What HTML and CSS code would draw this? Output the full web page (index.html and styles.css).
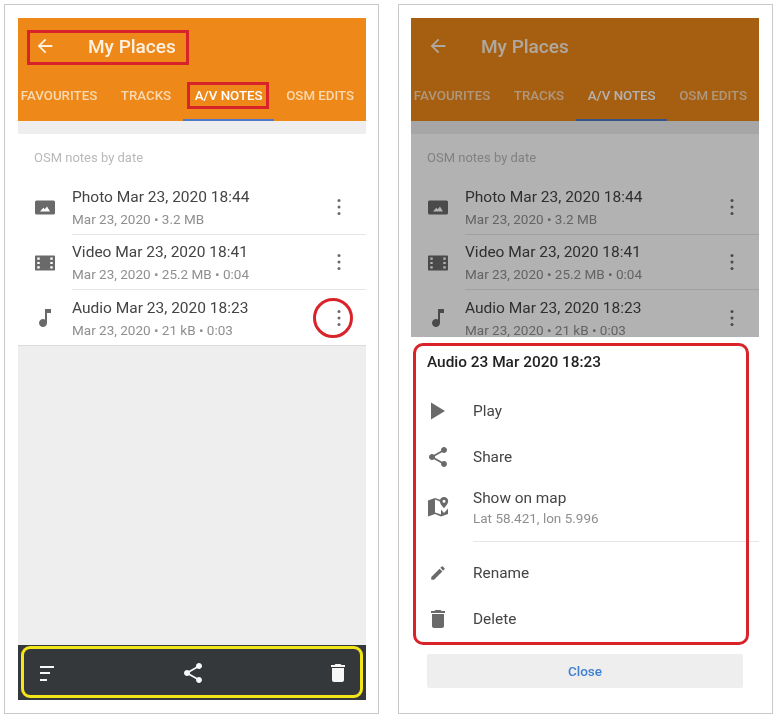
FILE: index.html
```html
<!DOCTYPE html>
<html lang="en">
<head>
<meta charset="UTF-8">
<title>My Places</title>
<link rel="stylesheet" href="styles.css">
</head>
<body>
    <svg class="icon-defs" aria-hidden="true">
        <symbol id="i-back" viewBox="0 0 24 24"><path d="M20 11H7.830l5.590-5.590L12 4l-8 8 8 8 1.410-1.410L7.830 13H20v-2z"/></symbol>
        <symbol id="i-photo" viewBox="0 0 24 24"><path fill-rule="evenodd" d="M3.500 4.500h17A1.500 1.500 0 0 1 22 6v11a1.500 1.500 0 0 1-1.500 1.500h-17A1.500 1.500 0 0 1 2 17V6a1.500 1.500 0 0 1 1.500-1.500zM7 15.500h10l-3-5-2.200 2.800-1.500-1.600z"/></symbol>
        <symbol id="i-film" viewBox="0 0 24 24"><path fill-rule="evenodd" d="M2.800 4.500h18.400a.8.8 0 0 1 .8.8v13.400a.8.8 0 0 1-.8.8H2.800a.8.8 0 0 1-.8-.8V5.300a.8.8 0 0 1 .8-.8zM4.300 6.500v2.200h2.400V6.500zm0 4.400v2.200h2.400v-2.200zm0 4.400v2.200h2.400v-2.200zM17.300 6.500v2.200h2.400V6.500zm0 4.400v2.200h2.400v-2.200zm0 4.400v2.200h2.400v-2.200z"/></symbol>
        <symbol id="i-music" viewBox="0 0 24 24"><path d="M12 3v10.550c-.59-.34-1.270-.55-2-.55-2.210 0-4 1.790-4 4s1.790 4 4 4 4-1.790 4-4V7h4V3h-6z"/></symbol>
        <symbol id="i-more" viewBox="0 0 24 24"><circle cx="12" cy="5.500" r="1.500"/><circle cx="12" cy="12" r="1.500"/><circle cx="12" cy="18.500" r="1.500"/></symbol>
        <symbol id="i-share" viewBox="0 0 24 24"><path d="M18 16.080c-.76 0-1.440.3-1.960.77L8.910 12.700c.05-.23.09-.46.09-.7s-.04-.47-.09-.7l7.050-4.110c.54.5 1.250.81 2.040.81 1.660 0 3-1.340 3-3s-1.340-3-3-3-3 1.340-3 3c0 .24.04.47.09.7L8.040 9.810C7.500 9.310 6.790 9 6 9c-1.660 0-3 1.340-3 3s1.340 3 3 3c.79 0 1.500-.31 2.040-.81l7.120 4.160c-.05.21-.08.43-.08.65 0 1.610 1.310 2.920 2.920 2.920 1.610 0 2.920-1.310 2.920-2.920s-1.310-2.920-2.920-2.920z"/></symbol>
        <symbol id="i-trash" viewBox="0 0 24 24"><path d="M6 19c0 1.100.9 2 2 2h8c1.100 0 2-.9 2-2V7H6v12zM19 4h-3.500l-1-1h-5l-1 1H5v2h14V4z"/></symbol>
        <symbol id="i-sort" viewBox="0 0 24 24"><path d="M5 5h14v2H5zM5 11h10v2H5zM5 18h7v2H5z"/></symbol>
        <symbol id="i-play" viewBox="0 0 24 24"><path d="M5 3.500v17L19 12z"/></symbol>
        <symbol id="i-edit" viewBox="0 0 24 24"><path d="M3 17.250V21h3.750L17.810 9.940l-3.750-3.750L3 17.250zM20.710 7.040c.39-.39.39-1.020 0-1.410l-2.340-2.340c-.39-.39-1.020-.39-1.410 0l-1.830 1.830 3.750 3.750 1.830-1.830z"/></symbol>
        <symbol id="i-map" viewBox="0 0 24 24"><path d="M2 5.500 9 3v16l-7 2.500zM9 3l5 1.800v1.600L9 4.600zM9 17.400l6 2.200v1.800L9 19zM15 21.400l7-2.500v-5.400l-4 4.500-3-3.500z"/><path fill-rule="evenodd" d="M18 2a4.200 4.200 0 0 1 4.200 4.200c0 2.800-4.200 7-4.200 7s-4.200-4.200-4.200-7A4.200 4.200 0 0 1 18 2zm0 2.700a1.500 1.500 0 1 0 0 3 1.500 1.500 0 0 0 0-3z"/></symbol>
    </svg>

    <section class="panel">
        <div class="app">
            <header class="appbar">
                <div class="toolbar">
                    <svg class="icon"><use href="#i-back"/></svg>
                    <span class="toolbar-title">My Places</span>
                </div>
                <nav class="tabs">
                    <span class="tab">FAVOURITES</span>
                    <span class="tab">TRACKS</span>
                    <span class="tab tab-active">A/V NOTES</span>
                    <span class="tab">OSM EDITS</span>
                </nav>
            </header>
            <div class="band"></div>
            <div class="notes">
                <div class="notes-head">OSM notes by date</div>
                <div class="note">
                    <svg class="icon note-icon"><use href="#i-photo"/></svg>
                    <div class="note-body">
                        <div class="note-text"><div class="note-title">Photo Mar 23, 2020 18:44</div><div class="note-sub">Mar 23, 2020 • 3.2 MB</div></div>
                        <svg class="icon note-more"><use href="#i-more"/></svg>
                    </div>
                </div>
                <div class="note">
                    <svg class="icon note-icon"><use href="#i-film"/></svg>
                    <div class="note-body">
                        <div class="note-text"><div class="note-title">Video Mar 23, 2020 18:41</div><div class="note-sub">Mar 23, 2020 • 25.2 MB • 0:04</div></div>
                        <svg class="icon note-more"><use href="#i-more"/></svg>
                    </div>
                </div>
                <div class="note note-last">
                    <svg class="icon note-icon"><use href="#i-music"/></svg>
                    <div class="note-body">
                        <div class="note-text"><div class="note-title">Audio Mar 23, 2020 18:23</div><div class="note-sub">Mar 23, 2020 • 21 kB • 0:03</div></div>
                        <svg class="icon note-more"><use href="#i-more"/></svg>
                    </div>
                </div>
            </div>
            <div class="spacer"></div>
            <footer class="bottombar">
                <svg class="icon"><use href="#i-sort"/></svg>
                <svg class="icon"><use href="#i-share"/></svg>
                <svg class="icon"><use href="#i-trash"/></svg>
            </footer>
            <div class="mark mark-title"></div>
            <div class="mark mark-tab"></div>
            <div class="mark mark-more"></div>
            <div class="mark mark-bar"></div>
        </div>
    </section>

    <section class="panel panel-second">
        <div class="app">
            <header class="appbar">
                <div class="toolbar">
                    <svg class="icon"><use href="#i-back"/></svg>
                    <span class="toolbar-title">My Places</span>
                </div>
                <nav class="tabs">
                    <span class="tab">FAVOURITES</span>
                    <span class="tab">TRACKS</span>
                    <span class="tab tab-active">A/V NOTES</span>
                    <span class="tab">OSM EDITS</span>
                </nav>
            </header>
            <div class="band"></div>
            <div class="notes">
                <div class="notes-head">OSM notes by date</div>
                <div class="note">
                    <svg class="icon note-icon"><use href="#i-photo"/></svg>
                    <div class="note-body">
                        <div class="note-text"><div class="note-title">Photo Mar 23, 2020 18:44</div><div class="note-sub">Mar 23, 2020 • 3.2 MB</div></div>
                        <svg class="icon note-more"><use href="#i-more"/></svg>
                    </div>
                </div>
                <div class="note">
                    <svg class="icon note-icon"><use href="#i-film"/></svg>
                    <div class="note-body">
                        <div class="note-text"><div class="note-title">Video Mar 23, 2020 18:41</div><div class="note-sub">Mar 23, 2020 • 25.2 MB • 0:04</div></div>
                        <svg class="icon note-more"><use href="#i-more"/></svg>
                    </div>
                </div>
                <div class="note note-last">
                    <svg class="icon note-icon"><use href="#i-music"/></svg>
                    <div class="note-body">
                        <div class="note-text"><div class="note-title">Audio Mar 23, 2020 18:23</div><div class="note-sub">Mar 23, 2020 • 21 kB • 0:03</div></div>
                        <svg class="icon note-more"><use href="#i-more"/></svg>
                    </div>
                </div>
            </div>
            <div class="scrim"></div>
            <div class="sheet">
                <div class="sheet-title">Audio 23 Mar 2020 18:23</div>
                <div class="action"><svg class="icon"><use href="#i-play"/></svg><span>Play</span></div>
                <div class="action"><svg class="icon"><use href="#i-share"/></svg><span>Share</span></div>
                <div class="action action-tall">
                    <svg class="icon"><use href="#i-map"/></svg>
                    <div><div>Show on map</div><div class="action-sub">Lat 58.421, lon 5.996</div></div>
                </div>
                <div class="sheet-divider"></div>
                <div class="action"><svg class="icon icon-small"><use href="#i-edit"/></svg><span>Rename</span></div>
                <div class="action"><svg class="icon"><use href="#i-trash"/></svg><span>Delete</span></div>
                <div class="close">Close</div>
                <div class="mark mark-sheet"></div>
            </div>
        </div>
    </section>
</body>
</html>
```

FILE: styles.css
```css
body {
    font-family: Roboto, "Liberation Sans", sans-serif;
    display: flex;
    gap: 19px;
    margin: 0;
    padding: 4px;
    background-color: white;
}
.icon-defs {
    display: none;
}
.panel {
    flex: none;
    width: 348px;
    height: 682px;
    padding: 13px 12px 13px 13px;
    border: 1px solid #c9c9c9;
}
.panel-second {
    padding-left: 12px;
    padding-right: 13px;
}
.app {
    position: relative;
    display: flex;
    flex-direction: column;
    height: 682px;
    overflow: hidden;
    background-color: white;
    filter: blur(0.5px);
}
.icon {
    display: block;
    flex: none;
    width: 24px;
    height: 24px;
    fill: #6a6a6a;
}
.icon-small {
    padding: 3px;
    box-sizing: border-box;
}

/* orange header */
.appbar {
    height: 103px;
    background-color: #ee8819;
}
.toolbar {
    display: flex;
    align-items: center;
    gap: 32px;
    height: 56px;
    padding-left: 16px;
}
.toolbar .icon {
    fill: #fdf1e2;
    width: 22px;
    height: 22px;
}
.toolbar-title {
    color: #fdf1e2;
    font-size: 19px;
    font-weight: 500;
}
.tabs {
    display: flex;
    height: 47px;
    margin-left: -9px;
}
.tab {
    flex: none;
    padding: 14px 11.800px 0;
    color: #fad9b2;
    font-size: 13.300px;
    font-weight: 500;
    white-space: nowrap;
}
.tab-active {
    color: white;
    border-bottom: 2px solid #4f79c6;
}
.band {
    height: 13px;
    background-color: #eeeeee;
}

/* notes list */
.notes {
    background-color: white;
}
.notes-head {
    height: 46px;
    padding: 16px 0 0 16px;
    box-sizing: border-box;
    color: #b9b9b9;
    font-size: 13px;
}
.note {
    display: flex;
    align-items: center;
    height: 55px;
    padding-left: 15px;
}
.note-icon {
    margin-right: 15px;
}
.note-body {
    display: flex;
    flex: 1;
    align-items: center;
    justify-content: space-between;
    height: 100%;
    padding-right: 15px;
    box-sizing: border-box;
    border-bottom: 1px solid #e6e6e6;
}
.note-last {
    border-bottom: 1px solid #dcdcdc;
}
.note-last .note-body {
    border-bottom: none;
}
.note-text {
    padding-top: 1px;
}
.note-title {
    color: #444;
    font-size: 15.500px;
    line-height: 20px;
}
.note-sub {
    margin-top: 3px;
    color: #8f8f8f;
    font-size: 13.500px;
    line-height: 18px;
}
.spacer {
    flex: 1;
    background-color: #eeeeee;
}
.bottombar {
    display: flex;
    align-items: center;
    justify-content: space-between;
    height: 55px;
    padding: 0 16px 0 17px;
    background-color: #35383a;
}
.bottombar .icon {
    fill: #f7f7f7;
}

/* bottom sheet */
.scrim {
    position: absolute;
    inset: 0;
    background-color: rgba(0, 0, 0, 0.3);
}
.sheet {
    position: absolute;
    left: 0;
    right: 0;
    bottom: 0;
    height: 363px;
    box-sizing: border-box;
    background-color: white;
    color: #444;
    font-size: 15.400px;
}
.sheet-title {
    height: 51px;
    padding: 16px 0 0 16px;
    box-sizing: border-box;
    color: #222;
    font-weight: 500;
}
.action {
    display: flex;
    align-items: center;
    gap: 23px;
    height: 46px;
    padding-left: 15px;
}
.action-tall {
    height: 56px;
    padding-bottom: 2px;
    box-sizing: border-box;
}
.action-sub {
    margin-top: 3px;
    color: #8f8f8f;
    font-size: 13.500px;
}
.sheet-divider {
    height: 1px;
    margin: 5px 0 8px 62px;
    background-color: #e6e6e6;
}
.close {
    height: 34px;
    margin: 12px 16px 0;
    border-radius: 2px;
    background-color: #eeeeee;
    color: #3f7fd0;
    font-size: 13.500px;
    font-weight: 500;
    line-height: 34px;
    text-align: center;
}

/* annotation frames drawn over the screenshot */
.mark {
    position: absolute;
    box-sizing: border-box;
    border: 3px solid #d8232a;
}
.mark-title {
    left: 9px;
    top: 12px;
    width: 162px;
    height: 35px;
}
.mark-tab {
    left: 169px;
    top: 64px;
    width: 82px;
    height: 27px;
}
.mark-more {
    left: 295px;
    top: 280px;
    width: 40px;
    height: 40px;
    border-radius: 50%;
}
.mark-bar {
    left: 3px;
    top: 628px;
    width: 342px;
    height: 52px;
    border-color: #f2e51a;
    border-radius: 9px;
}
.mark-sheet {
    left: 2px;
    top: 6px;
    width: 336px;
    height: 302px;
    border-radius: 10px;
}
```
